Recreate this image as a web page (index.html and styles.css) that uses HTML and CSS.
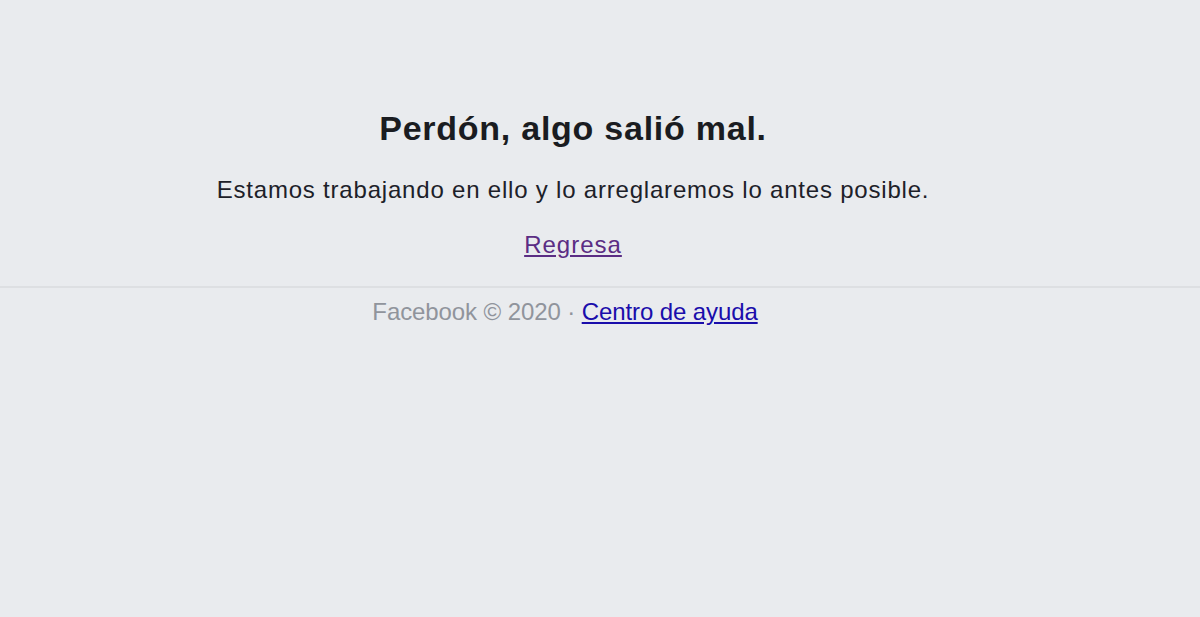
FILE: index.html
```html
<!DOCTYPE html>
<html lang="es">
<head>
<meta charset="utf-8">
<title>Error</title>
<link rel="stylesheet" href="styles.css">
</head>
<body>
<div class="content">
  <h1 class="title">Perdón, algo salió mal.</h1>
  <p class="message">Estamos trabajando en ello y lo arreglaremos lo antes posible.</p>
  <p class="back"><a class="back-link" href="#">Regresa</a></p>
</div>
<div class="footer">
  <span class="copy">Facebook © 2020 · </span><a class="help" href="#">Centro de ayuda</a>
</div>
</body>
</html>
```
FILE: styles.css
```css
html, body {
  margin: 0;
  padding: 0;
  background: #e9ebee;
  font-family: "Liberation Sans", Arial, sans-serif;
  color: #1d2129;
}
.content {
  padding: 108px 54px 24px 0;
  text-align: center;
  border-bottom: 2px solid #dddfe2;
}
.title {
  margin: 0;
  font-size: 34px;
  line-height: 40px;
  font-weight: bold;
  letter-spacing: 0.75px;
  color: #1a1c21;
}
.message {
  margin: 25px 0 0;
  font-size: 24px;
  line-height: 34px;
  letter-spacing: 0.8px;
}
.back {
  margin: 21px 0 0;
  font-size: 24px;
  line-height: 34px;
  letter-spacing: 1px;
}
.back-link {
  color: #5b2d84;
}
.footer {
  width: 1130px;
  text-align: center;
  padding-top: 9px;
  font-size: 24px;
  line-height: 30px;
  letter-spacing: -0.1px;
}
.copy {
  color: #90949c;
}
.help {
  color: #1a0dab;
}
```
